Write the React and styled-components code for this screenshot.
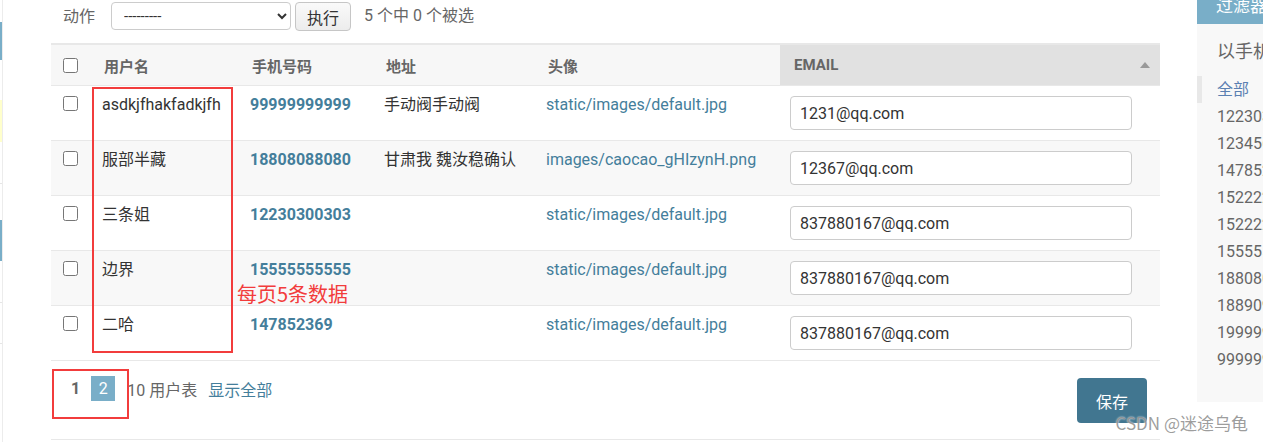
import React from 'react';
import styled, { createGlobalStyle } from 'styled-components';

const GlobalStyle = createGlobalStyle`
  html, body {
    margin: 0;
    padding: 0;
    overflow: hidden;
    background: #fff;
    font-family: Roboto, "Noto Sans CJK SC", sans-serif;
  }
`;

const Page = styled.div`
  position: relative;
  display: flex;
  align-items: flex-start;
  width: 1263px;
  height: 442px;
  overflow: hidden;
`;

const NavStrip = styled.div`
  display: flex;
  flex-direction: column;
  flex-shrink: 0;
  width: 2px;
  height: 442px;
  border-right: 1px solid #ececec;
`;

const NavMark = styled.div`
  height: ${props => props.$h}px;
  background: ${props => props.$color || 'transparent'};
  flex-shrink: 0;
`;

const Main = styled.div`
  flex-shrink: 0;
  width: 1109px;
  margin-left: 48px;
`;

const ActionBar = styled.div`
  display: flex;
  align-items: flex-start;
  height: 41px;
  padding-top: 2px;
  font-size: 16px;
  color: #666;
`;

const ActionLabel = styled.label`
  margin: 6px 16px 0 12px;
  line-height: 18px;
`;

const Select = styled.select`
  width: 180px;
  height: 28px;
  border: 1px solid #ccc;
  border-radius: 4px;
  background: #fff;
  padding: 0 8px;
  font-family: Roboto, sans-serif;
  font-size: 15px;
  color: #333;
`;

const RunButton = styled.button`
  height: 29px;
  margin-left: 4px;
  padding: 0 11px;
  border: 1px solid #c6c6c6;
  border-radius: 4px;
  background: linear-gradient(#fafafa, #ececec);
  font-family: Roboto, "Noto Sans CJK SC", sans-serif;
  font-size: 16px;
  color: #333;
`;

const Counter = styled.span`
  margin: 5px 0 0 13px;
  line-height: 18px;
`;

const Table = styled.table`
  width: 1109px;
  table-layout: fixed;
  border-collapse: collapse;
`;

const HeadCell = styled.th`
  height: 40px;
  padding: 0 10px 0 14px;
  border-top: 2px solid #e8e8e8;
  border-bottom: 1px solid #e8e8e8;
  background: ${props => (props.$sorted ? '#e1e1e1' : '#f7f7f7')};
  text-align: left;
  font-size: 15px;
  font-weight: 700;
  color: #666;
  text-transform: uppercase;
  white-space: nowrap;
`;

const CheckHead = styled(HeadCell)`
  padding-left: 12px;
`;

const SortWrap = styled.div`
  display: flex;
  align-items: center;
  justify-content: space-between;
`;

const SortArrow = styled.span`
  width: 0;
  height: 0;
  border-left: 5px solid transparent;
  border-right: 5px solid transparent;
  border-bottom: 6px solid #999;
`;

const Row = styled.tr`
  background: ${props => (props.$alt ? '#f8f8f8' : '#fff')};
`;

const Cell = styled.td`
  padding: 10px 12px;
  border-bottom: 1px solid #e8e8e8;
  vertical-align: top;
  font-size: 16px;
  line-height: 18px;
  color: #333;
  white-space: nowrap;
`;

const InputCell = styled(Cell)`
  padding-left: 10px;
`;

const Check = styled.input.attrs({ type: 'checkbox' })`
  display: block;
  width: 15px;
  height: 15px;
  margin: 0;
`;

const LinkText = styled.a`
  color: #447e9b;
  font-weight: ${props => (props.$bold ? 700 : 400)};
  text-decoration: none;
`;

const EmailInput = styled.input`
  box-sizing: border-box;
  width: 342px;
  height: 34px;
  padding: 0 9px;
  border: 1px solid #ccc;
  border-radius: 4px;
  background: #fff;
  font-family: Roboto, sans-serif;
  font-size: 16px;
  color: #333;
`;

const Footer = styled.div`
  display: flex;
  align-items: flex-start;
  justify-content: space-between;
  box-sizing: border-box;
  height: 79px;
  padding: 15px 13px 0 20px;
  border-bottom: 1px solid #e8e8e8;
`;

const Pages = styled.div`
  display: flex;
  align-items: center;
  height: 25px;
  font-size: 16px;
  color: #666;
`;

const PageCurrent = styled.span`
  font-weight: 700;
  color: #666;
  margin-right: 11px;
`;

const PageLink = styled.a`
  display: flex;
  align-items: center;
  justify-content: center;
  width: 24px;
  height: 25px;
  background: #79aec8;
  color: #fff;
  margin-right: 12px;
`;

const ShowAll = styled.a`
  margin-left: 11px;
  color: #447e9b;
`;

const SaveButton = styled.button`
  width: 70px;
  height: 45px;
  margin-top: 2px;
  border: none;
  border-radius: 4px;
  background: #417690;
  color: #fff;
  font-family: Roboto, "Noto Sans CJK SC", sans-serif;
  font-size: 16px;
`;

const Filter = styled.div`
  flex-shrink: 0;
  width: 260px;
  height: 402px;
  margin-left: 37px;
  background: #f8f8f8;
`;

const FilterTitle = styled.h2`
  box-sizing: border-box;
  height: 24px;
  margin: 0;
  padding: 0 19px;
  background: #79aec8;
  color: #fff;
  font-size: 17px;
  font-weight: 400;
  line-height: 12px;
`;

const FilterHeading = styled.h3`
  margin: 18px 0 0;
  padding-left: 20px;
  font-size: 18px;
  font-weight: 400;
  line-height: 20px;
  color: #666;
`;

const FilterList = styled.ul`
  margin: 14px 0 0;
  padding: 0;
  list-style: none;
`;

const FilterItem = styled.li`
  height: 27px;
  padding-left: 15px;
  border-left: 5px solid ${props => (props.$selected ? '#e8e8e8' : 'transparent')};
  font-size: 16px;
  line-height: 27px;
  color: ${props => (props.$selected ? '#5b80b2' : '#666')};
  white-space: nowrap;
`;

const MarkBox = styled.div`
  position: absolute;
  left: ${props => props.$x}px;
  top: ${props => props.$y}px;
  width: ${props => props.$w}px;
  height: ${props => props.$h}px;
  box-sizing: border-box;
  border: 2px solid #f23c3c;
`;

const MarkText = styled.div`
  position: absolute;
  left: 237px;
  top: 281px;
  font-size: 20px;
  line-height: 26px;
  color: #f23c3c;
  font-family: "Noto Sans CJK SC", sans-serif;
`;

const Watermark = styled.div`
  position: absolute;
  right: 15px;
  top: 411px;
  font-family: "Noto Sans CJK SC", sans-serif;
  font-size: 17px;
  line-height: 24px;
  color: rgba(140, 140, 140, 0.85);
  text-shadow: 0 0 2px #fff;
`;

const rows = [
  ['asdkjfhakfadkjfh', '99999999999', '手动阀手动阀', 'static/images/default.jpg', '1231@qq.com'],
  ['服部半藏', '18808088080', '甘肃我 魏汝稳确认', 'images/caocao_gHIzynH.png', '12367@qq.com'],
  ['三条姐', '12230300303', '', 'static/images/default.jpg', '837880167@qq.com'],
  ['边界', '15555555555', '', 'static/images/default.jpg', '837880167@qq.com'],
  ['二哈', '147852369', '', 'static/images/default.jpg', '837880167@qq.com'],
];

const phones = [
  '12230300303', '1234567890', '147852369', '15222222222', '15222222223',
  '15555555555', '18808088080', '18890909090', '19999999999', '99999999999',
];

const App = () => {
  return (
    <Page>
      <GlobalStyle />
      <NavStrip>
        <NavMark $h={22} />
        <NavMark $h={38} $color="#79aec8" />
        <NavMark $h={40} />
        <NavMark $h={42} $color="#ffffcc" />
        <NavMark $h={41} />
        <NavMark $h={1} $color="#e6e6e6" />
        <NavMark $h={36} />
        <NavMark $h={41} $color="#79aec8" />
        <NavMark $h={41} />
        <NavMark $h={1} $color="#e6e6e6" />
        <NavMark $h={40} />
        <NavMark $h={1} $color="#e6e6e6" />
      </NavStrip>

      <Main>
        <ActionBar>
          <ActionLabel>动作</ActionLabel>
          <Select defaultValue="">
            <option value="">---------</option>
          </Select>
          <RunButton>执行</RunButton>
          <Counter>5 个中 0 个被选</Counter>
        </ActionBar>

        <Table>
          <colgroup>
            <col style={{ width: 39 }} />
            <col style={{ width: 148 }} />
            <col style={{ width: 134 }} />
            <col style={{ width: 162 }} />
            <col style={{ width: 246 }} />
            <col style={{ width: 380 }} />
          </colgroup>
          <thead>
            <tr>
              <CheckHead><Check /></CheckHead>
              <HeadCell>用户名</HeadCell>
              <HeadCell>手机号码</HeadCell>
              <HeadCell>地址</HeadCell>
              <HeadCell>头像</HeadCell>
              <HeadCell $sorted>
                <SortWrap>
                  <span>Email</span>
                  <SortArrow />
                </SortWrap>
              </HeadCell>
            </tr>
          </thead>
          <tbody>
            {rows.map((r, i) => (
              <Row key={i} $alt={i % 2 === 1}>
                <Cell><Check /></Cell>
                <Cell>{r[0]}</Cell>
                <Cell><LinkText $bold>{r[1]}</LinkText></Cell>
                <Cell>{r[2]}</Cell>
                <Cell><LinkText>{r[3]}</LinkText></Cell>
                <InputCell><EmailInput defaultValue={r[4]} /></InputCell>
              </Row>
            ))}
          </tbody>
        </Table>

        <Footer>
          <Pages>
            <PageCurrent>1</PageCurrent>
            <PageLink>2</PageLink>
            <span>10 用户表</span>
            <ShowAll>显示全部</ShowAll>
          </Pages>
          <SaveButton>保存</SaveButton>
        </Footer>
      </Main>

      <Filter>
        <FilterTitle>过滤器</FilterTitle>
        <FilterHeading>以手机号码</FilterHeading>
        <FilterList>
          <FilterItem $selected>全部</FilterItem>
          {phones.map(p => (
            <FilterItem key={p}>{p}</FilterItem>
          ))}
        </FilterList>
      </Filter>

      <MarkBox $x={92} $y={87} $w={141} $h={266} />
      <MarkBox $x={52} $y={369} $w={77} $h={50} />
      <MarkText>每页5条数据</MarkText>
      <Watermark>CSDN @迷途乌龟</Watermark>
    </Page>
  );
};

export default App;
